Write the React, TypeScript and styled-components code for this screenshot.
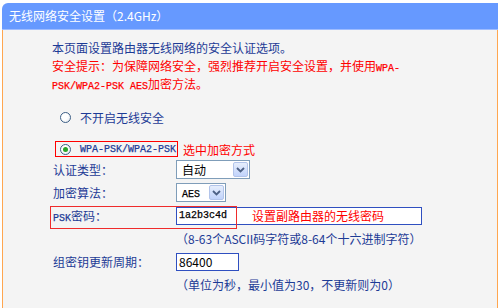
import styled, { createGlobalStyle } from "styled-components"

const GlobalStyle = createGlobalStyle`
  html, body {
    margin: 0;
    padding: 0;
    background: #ffffff;
  }
  body {
    font-family: "Noto Sans CJK SC", "Liberation Sans", sans-serif;
    font-size: 12px;
  }
`

const NAVY = "#1d3b96"
const RED = "#ff0000"
const ORANGE = "#ffa64f"

const Panel = styled.div`
  margin: 3px 2px 0 2px;
  width: 496px;
  height: 305px;
  display: flex;
  flex-direction: column;
`

const Header = styled.div`
  height: 26px;
  flex: none;
  display: flex;
  align-items: center;
  padding-left: 7px;
  background: #6699ff;
  border-top-left-radius: 6px;
  border-bottom: 1px solid #9fbcff;
  color: #ffffff;
  font-size: 12px;
  line-height: 14px;
`

const Body = styled.div`
  flex: 1;
  display: flex;
  flex-direction: column;
  padding: 9px 0 0 49px;
  background: #f4f4f4;
  border-left: 1px solid ${ORANGE};
  border-right: 1px solid ${ORANGE};
  color: ${NAVY};
`

const Line = styled.div<{ $red?: boolean }>`
  height: 18px;
  line-height: 18px;
  white-space: nowrap;
  color: ${({ $red }) => ($red ? RED : NAVY)};
`

// SimSun-like half-width ASCII: 6px per glyph
const Mono = styled.span`
  font-family: "Liberation Mono", monospace;
  font-size: 10px;
  -webkit-text-stroke: 0.25px currentColor;
`

const RadioRow = styled.label<{ $top: number }>`
  margin-top: ${({ $top }) => $top}px;
  height: 18px;
  display: flex;
  align-items: center;
`

const RadioMark = styled.span<{ $checked?: boolean }>`
  width: 11px;
  height: 11px;
  margin-right: 9px;
  border-radius: 50%;
  border: 1px solid #3d5f86;
  background: radial-gradient(circle at 35% 35%, #ffffff 40%, #dfe4ea 100%);
  display: flex;
  align-items: center;
  justify-content: center;
  box-sizing: border-box;
  &::after {
    content: "";
    display: ${({ $checked }) => ($checked ? "block" : "none")};
    width: 5px;
    height: 5px;
    border-radius: 50%;
    background: #2aa52a;
  }
`

const Outlined = styled.span`
  display: flex;
  align-items: center;
  height: 14px;
  margin-left: 3px;
  padding: 0 1px 0 4px;
  border: 1px solid ${RED};
`

const RadioFree = styled.span`
  display: flex;
  align-items: center;
  margin-left: 8px;
`

const Note = styled.span`
  color: ${RED};
  margin-left: 5px;
  white-space: nowrap;
`

const FormRow = styled.div`
  position: relative;
  height: 23px;
  display: grid;
  grid-template-columns: 124px 1fr;
  align-items: center;
  white-space: nowrap;
`

const Label = styled.span`
  padding-left: 1px;
`

const Select = styled.div<{ $w: number }>`
  width: ${({ $w }) => $w}px;
  height: 19px;
  box-sizing: border-box;
  border: 1px solid #7f9db9;
  background: #ffffff;
  display: flex;
  align-items: center;
  justify-content: space-between;
  padding: 1px;
  color: #000000;
`

const SelectText = styled.span`
  padding-left: 4px;
  line-height: 15px;
`

const DropButton = styled.span`
  width: 15px;
  height: 15px;
  box-sizing: border-box;
  border: 1px solid #b2c4ea;
  border-radius: 2px;
  background: linear-gradient(#e6eefc, #c1d3fb);
  display: flex;
  align-items: center;
  justify-content: center;
`

const TextBox = styled.div<{ $w: number }>`
  position: relative;
  width: ${({ $w }) => $w}px;
  height: 18px;
  box-sizing: border-box;
  border: 1px solid #2f4fc0;
  background: #ffffff;
  display: flex;
  align-items: center;
  padding-left: 2px;
  color: #000000;
`

const BoxNote = styled.span`
  position: absolute;
  left: 75px;
  top: 0;
  line-height: 16px;
  color: ${RED};
`

const Highlight = styled.div`
  position: absolute;
  left: -2px;
  top: 2px;
  width: 187px;
  height: 23px;
  box-sizing: border-box;
  border: 1px solid #ef2b2b;
  pointer-events: none;
`

const Hint = styled.span`
  grid-column: 2;
`

const Chevron = () => (
  <svg width="9" height="6" viewBox="0 0 9 6">
    <path d="M1 1 L4.5 4.5 L8 1" fill="none" stroke="#4d6185" strokeWidth="1.8" />
  </svg>
)

export default function App() {
  return (
    <>
      <GlobalStyle />
      <Panel>
        <Header>无线网络安全设置（2.4GHz）</Header>
        <Body>
          <Line>本页面设置路由器无线网络的安全认证选项。</Line>
          <Line $red>
            安全提示：为保障网络安全，强烈推荐开启安全设置，并使用<Mono>WPA-</Mono>
          </Line>
          <Line $red>
            <Mono>PSK/WPA2-PSK AES</Mono>加密方法。
          </Line>

          <RadioRow $top={15}>
            <RadioFree>
              <RadioMark />
              不开启无线安全
            </RadioFree>
          </RadioRow>

          <RadioRow $top={14}>
            <Outlined>
              <RadioMark $checked />
              <Mono>WPA-PSK/WPA2-PSK</Mono>
            </Outlined>
            <Note>选中加密方式</Note>
          </RadioRow>

          <FormRow>
            <Label>认证类型：</Label>
            <Select $w={74}>
              <SelectText>自动</SelectText>
              <DropButton>
                <Chevron />
              </DropButton>
            </Select>
          </FormRow>
          <FormRow>
            <Label>加密算法：</Label>
            <Select $w={50}>
              <SelectText>
                <Mono>AES</Mono>
              </SelectText>
              <DropButton>
                <Chevron />
              </DropButton>
            </Select>
          </FormRow>
          <FormRow>
            <Label>
              <Mono>PSK</Mono>密码：
            </Label>
            <TextBox $w={246}>
              <Mono>1a2b3c4d</Mono>
              <BoxNote>设置副路由器的无线密码</BoxNote>
            </TextBox>
            <Highlight />
          </FormRow>
          <FormRow>
            <Hint>（8-63个ASCII码字符或8-64个十六进制字符）</Hint>
          </FormRow>
          <FormRow>
            <Label>组密钥更新周期：</Label>
            <TextBox $w={63}>86400</TextBox>
          </FormRow>
          <FormRow>
            <Hint>（单位为秒，最小值为30，不更新则为0）</Hint>
          </FormRow>
        </Body>
      </Panel>
    </>
  )
}
